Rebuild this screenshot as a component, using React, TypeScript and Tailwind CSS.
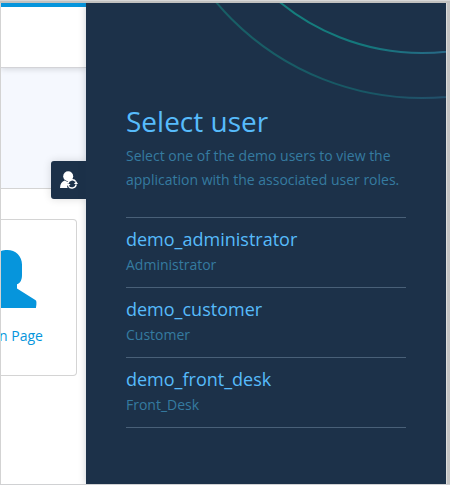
const users = [
  { name: "demo_administrator", role: "Administrator" },
  { name: "demo_customer", role: "Customer" },
  { name: "demo_front_desk", role: "Front_Desk" },
];

function PersonIcon() {
  return (
    <svg className="block h-[58px] w-9" viewBox="0 0 36 58" fill="#0695dc">
      <path d="M0 1.1C1.8.3 4 0 6.3 0C14.500 0 21 6 21 14.500V25C21 29.500 19.500 33.200 16 34.200V38.500L34.300 50Q35.400 50.700 35.400 52V54.500L34.900 58H0Z" />
    </svg>
  );
}

function SwitchUserIcon() {
  return (
    <svg className="block h-[18px] w-[19px]" viewBox="0 0 19 18" fill="none">
      <circle cx="8.200" cy="5.200" r="5" fill="#fff" />
      <path d="M0 17C.2 12.800 1.900 10.400 4.700 9.600C6 10.800 8 11 9.400 10.200C7 12.200 6.600 15 7.600 17Z" fill="#fff" />
      <path d="M8 12.700A4.300 4.300 0 0 1 15.800 10.700" stroke="#fff" strokeWidth="1.400" />
      <path d="M16.200 13.300A4.300 4.300 0 0 1 8.500 15.300" stroke="#fff" strokeWidth="1.400" />
      <path d="M13.800 12.900H18L16.200 10.200Z" fill="#fff" />
      <path d="M6.400 13.100H10.500L8.200 15.800Z" fill="#fff" />
    </svg>
  );
}

export default function App() {
  return (
    <div className="flex h-[485px] w-[450px] flex-col overflow-hidden bg-[#c3c3c3] font-['Open_Sans',sans-serif]">
      <div className="h-px shrink-0 bg-[#d7d7d7]" />
      <div className="h-[2px] shrink-0 bg-[#c1c1bf]" />
      <div className="flex h-[481px] shrink-0">
        <div className="w-px shrink-0 bg-[#d3d3d3]" />
        <main className="relative w-[85px] shrink-0 overflow-hidden bg-white">
          <header className="relative h-[65px] border-t-4 border-b border-t-[#0695dc] border-b-[#d3d3d7] bg-white shadow-[0_1px_6px_rgba(0,0,0,0.15)]" />
          <div className="h-[121px] border-b border-[#d4d4d4] bg-[#f5f8fe]" />
          <div className="mt-[30px] h-[157px] w-[76px] rounded-r-[4px] border border-l-0 border-[#d4d4d4] bg-white pt-[30px]">
            <PersonIcon />
            <div className="mt-[17px] -ml-[2px] whitespace-nowrap text-sm leading-[21px] text-[#0695dc]">n Page</div>
          </div>
          <button className="absolute top-[158px] right-0 flex h-[38px] w-[35px] items-center rounded-l-[3px] bg-[#1c3149] pl-[9px] shadow-[0_0_8px_rgba(0,0,0,0.14)]">
            <SwitchUserIcon />
          </button>
        </main>
        <aside className="relative w-[360px] shrink-0 bg-[#1c3149] px-10 shadow-[0_0_7px_rgba(28,49,73,0.25)] [clip-path:inset(0_0_0_-10px)]">
          <svg className="absolute top-0 left-0 h-[110px] w-[360px]" viewBox="0 0 360 110" fill="none">
            <defs>
              <linearGradient id="arc" x1="130" x2="360" y1="0" y2="0" gradientUnits="userSpaceOnUse">
                <stop offset="0" stopColor="#15867e" />
                <stop offset=".65" stopColor="#14777c" />
                <stop offset="1" stopColor="#286887" />
              </linearGradient>
            </defs>
            <circle cx="336" cy="-174" r="224" stroke="url(#arc)" strokeWidth="2" />
            <circle cx="336" cy="-174" r="269" stroke="url(#arc)" strokeWidth="2" opacity=".55" />
          </svg>
          <h1 className="pt-[98px] text-[28px] leading-10 text-[#57bbfb]">Select user</h1>
          <p className="mt-[3px] whitespace-nowrap text-sm leading-6 text-[#357ba0]">
            Select one of the demo users to view the
            <br />
            application with the associated user roles.
          </p>
          <ul className="mt-[25px] border-t border-[#496078]">
            {users.map((user) => (
              <li key={user.name} className="h-[70px] border-b border-[#496078] pt-2">
                <div className="mb-px text-lg leading-[26px] text-[#57bbfb]">{user.name}</div>
                <div className="text-sm leading-6 text-[#357ba0]">{user.role}</div>
              </li>
            ))}
          </ul>
        </aside>
        <div className="w-px bg-[#dcdcdc]" />
      </div>
      <div className="h-px shrink-0 bg-[#d0d1d3]" />
    </div>
  );
}
